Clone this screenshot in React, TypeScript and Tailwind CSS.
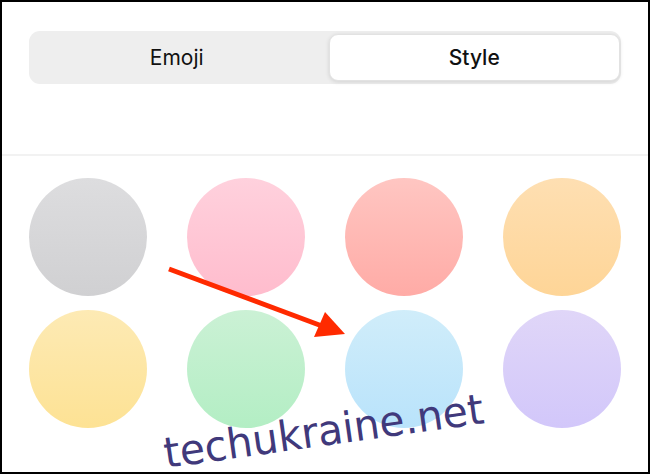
import React from "react";

const swatches: string[] = [
    "bg-gradient-to-b from-[#dddddf] to-[#d0d0d2]",
    "bg-gradient-to-b from-[#ffd1dd] to-[#ffbccd]",
    "bg-gradient-to-b from-[#ffc6c2] to-[#ffaba6]",
    "bg-gradient-to-b from-[#fedfb2] to-[#fed597]",
    "bg-gradient-to-b from-[#fdeab4] to-[#fde294]",
    "bg-gradient-to-b from-[#cbf1d5] to-[#b3eec4]",
    "bg-gradient-to-b from-[#d0edfa] to-[#b9e3fb]",
    "bg-gradient-to-b from-[#e0d6f8] to-[#d2c7fa]",
];

export default function App(): React.ReactElement {
    return (
        <div className="relative box-border h-[474px] w-[650px] overflow-hidden border-2 border-black bg-white">
            <div className="mx-[27px] mt-[29px] grid h-[53px] grid-cols-2 rounded-[11px] bg-[#eeeeee] py-[3px] pr-[1px]">
                <div className="flex items-center justify-center text-[21px] text-[#111] font-['Inter',sans-serif]">
                    Emoji
                </div>
                <div className="ml-[4px] flex items-center justify-center rounded-[9px] border border-[#e2e2e2] bg-white text-[21px] font-medium text-[#111] shadow-[0_1px_4px_rgba(0,0,0,0.12)] font-['Inter',sans-serif]">
                    Style
                </div>
            </div>

            <div className="mt-[70px] h-[2px] bg-[#f2f2f2]" />

            <div className="mx-[27px] mt-[22px] grid grid-cols-4 gap-x-[40px] gap-y-[14px]">
                {swatches.map((s, i) => (
                    <div key={i} className={`h-[118px] w-[118px] rounded-full ${s}`} />
                ))}
            </div>

            <svg className="absolute left-0 top-0" width="650" height="474" viewBox="0 0 650 474">
                <line x1="167" y1="267" x2="320" y2="324" stroke="#ff2a00" strokeWidth="5" />
                <polygon points="343,332 323,310 312,335" fill="#ff2a00" />
            </svg>

            <div className="absolute left-[162px] top-[431px] origin-left -rotate-[8deg] scale-x-[0.97] text-[42px] leading-none text-[#40397b] font-['DejaVu_Sans',sans-serif]">
                techukraine.net
            </div>
        </div>
    );
}
